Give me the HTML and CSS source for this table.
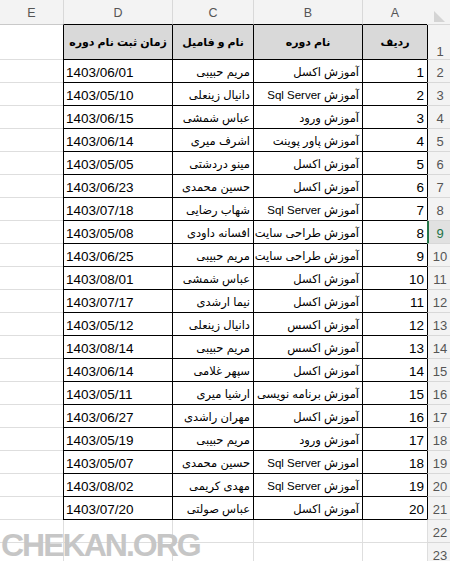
FILE: index.html
```html
<!DOCTYPE html>
<html lang="fa">
<head>
<meta charset="utf-8">
<link rel="stylesheet" href="styles.css">
</head>
<body>
<div class="page">
<div class="sheet">
  <div class="r ch corner"><svg class="tri" width="11" height="11" viewBox="0 0 11 11"><polygon points="0,0 0,11 11,11" fill="#d4d4d4"/></svg></div>
  <div class="ch cx">A</div><div class="ch cx">B</div><div class="ch cx">C</div><div class="ch cx">D</div><div class="ch e">E</div>

  <div class="r rt rb">1</div>
  <div class="h">ردیف</div><div class="h">نام دوره</div><div class="h">نام و فامیل</div><div class="h">زمان ثبت نام دوره</div><div class="e"></div>

  <div class="r rt">2</div><div class="t a">1</div><div class="t p">آموزش اکسل</div><div class="t p">مریم حبیبی</div><div class="t d">1403/06/01</div><div class="e"></div>
  <div class="r rt">3</div><div class="t a">2</div><div class="t p">آموزش Sql Server</div><div class="t p">دانیال زینعلی</div><div class="t d">1403/05/10</div><div class="e"></div>
  <div class="r rt">4</div><div class="t a">3</div><div class="t p">آموزش ورود</div><div class="t p">عباس شمشی</div><div class="t d">1403/06/15</div><div class="e"></div>
  <div class="r rt">5</div><div class="t a">4</div><div class="t p">آموزش پاور پوینت</div><div class="t p">اشرف میری</div><div class="t d">1403/06/14</div><div class="e"></div>
  <div class="r rt">6</div><div class="t a">5</div><div class="t p">آموزش اکسل</div><div class="t p">مینو دردشتی</div><div class="t d">1403/05/05</div><div class="e"></div>
  <div class="r rt">7</div><div class="t a">6</div><div class="t p">آموزش اکسل</div><div class="t p">حسین محمدی</div><div class="t d">1403/06/23</div><div class="e"></div>
  <div class="r rt">8</div><div class="t a">7</div><div class="t p">آموزش Sql Server</div><div class="t p">شهاب رضایی</div><div class="t d">1403/07/18</div><div class="e"></div>
  <div class="r sel">9</div><div class="t a">8</div><div class="t p">آموزش طراحی سایت</div><div class="t p">افسانه داودی</div><div class="t d">1403/05/08</div><div class="e"></div>
  <div class="r rt">10</div><div class="t a">9</div><div class="t p">آموزش طراحی سایت</div><div class="t p">مریم حبیبی</div><div class="t d">1403/06/25</div><div class="e"></div>
  <div class="r rt">11</div><div class="t a">10</div><div class="t p">آموزش اکسل</div><div class="t p">عباس شمشی</div><div class="t d">1403/08/01</div><div class="e"></div>
  <div class="r rt">12</div><div class="t a">11</div><div class="t p">آموزش اکسل</div><div class="t p">نیما ارشدی</div><div class="t d">1403/07/17</div><div class="e"></div>
  <div class="r rt">13</div><div class="t a">12</div><div class="t p">آموزش اکسس</div><div class="t p">دانیال زینعلی</div><div class="t d">1403/05/12</div><div class="e"></div>
  <div class="r rt">14</div><div class="t a">13</div><div class="t p">آموزش اکسس</div><div class="t p">مریم حبیبی</div><div class="t d">1403/08/14</div><div class="e"></div>
  <div class="r rt">15</div><div class="t a">14</div><div class="t p">آموزش اکسل</div><div class="t p">سپهر غلامی</div><div class="t d">1403/06/14</div><div class="e"></div>
  <div class="r rt">16</div><div class="t a">15</div><div class="t p">آموزش برنامه نویسی</div><div class="t p">ارشیا میری</div><div class="t d">1403/05/11</div><div class="e"></div>
  <div class="r rt">17</div><div class="t a">16</div><div class="t p">آموزش اکسل</div><div class="t p">مهران راشدی</div><div class="t d">1403/06/27</div><div class="e"></div>
  <div class="r rt">18</div><div class="t a">17</div><div class="t p">آموزش ورود</div><div class="t p">مریم حبیبی</div><div class="t d">1403/05/19</div><div class="e"></div>
  <div class="r rt">19</div><div class="t a">18</div><div class="t p">اموزش Sql Server</div><div class="t p">حسین محمدی</div><div class="t d">1403/05/07</div><div class="e"></div>
  <div class="r rt">20</div><div class="t a">19</div><div class="t p">آموزش Sql Server</div><div class="t p">مهدی کریمی</div><div class="t d">1403/08/02</div><div class="e"></div>
  <div class="r rt">21</div><div class="t a">20</div><div class="t p">آموزش اکسل</div><div class="t p">عباس صولتی</div><div class="t d">1403/07/20</div><div class="e"></div>

  <div class="r">22</div><div></div><div></div><div></div><div></div><div class="e"></div>
  <div class="r">23</div><div></div><div></div><div></div><div></div><div class="e"></div>
</div>
<div class="mark">CHEKAN.ORG</div>
</div>
</body>
</html>
```

FILE: styles.css
```css
html, body {
  margin: 0;
  padding: 0;
  background: #ffffff;
}

.page {
  position: relative;
  width: 450px;
  height: 561px;
  overflow: hidden;
}

.sheet {
  display: grid;
  direction: rtl;
  grid-template-columns: 23px 65px 109px 81px 109px 63px;
  grid-template-rows: 25px 35px repeat(22, 23px);
  width: 450px;
  font-family: "Liberation Sans", "DejaVu Sans", sans-serif;
  font-size: 13.5px;
  color: #000;
}

.sheet > div {
  box-sizing: border-box;
  border-left: 1px solid #dedede;
  border-bottom: 1px solid #dedede;
  display: flex;
  align-items: flex-end;
  justify-content: flex-start;
  padding: 0 3px 2px 3px;
  white-space: nowrap;
  overflow: hidden;
}

.sheet > div.e {
  border-left: none;
}

/* column headers */
.sheet > .ch {
  background: #f3f3f3;
  color: #555;
  font-size: 12.5px;
  justify-content: center;
  padding-bottom: 4px;
  border-left-color: #d8d8d8;
  border-bottom-color: #c9c9c9;
}

.sheet > .ch.cx {
  border-bottom-color: #000;
}

.sheet > .corner {
  justify-content: flex-start;
  padding: 0 0 3px 2px;
  direction: ltr;
  border-left: none;
}

.tri {
  display: block;
}

/* row headers */
.sheet > .r {
  background: #f3f3f3;
  color: #555;
  font-size: 13px;
  justify-content: center;
  padding: 0 0 2px 2px;
  border-bottom-color: #d8d8d8;
}

.sheet > .r.rt {
  border-left-color: #000;
}

.sheet > .r.rb {
  padding-bottom: 0;
}

.sheet > .r.sel {
  background: #e1e1e1;
  color: #217346;
  border-left: 2px solid #217346;
  padding-left: 1px;
}

/* table header row */
.sheet > .h {
  background: #d9d9d9;
  font-weight: bold;
  font-size: 11px;
  justify-content: center;
  align-items: center;
  padding: 0 2px;
  border-left-color: #000;
  border-bottom-color: #000;
}

/* data cells */
.sheet > .t {
  border-left-color: #000;
  border-bottom-color: #000;
}

.sheet > .t.p {
  font-size: 11.5px;
  padding-bottom: 3px;
}

.sheet > .t.a {
  justify-content: flex-start;
}

.sheet > .t.d {
  justify-content: flex-end;
  padding-left: 2px;
}

.mark {
  position: absolute;
  left: 1px;
  top: 527px;
  font-family: "Liberation Sans", sans-serif;
  font-weight: bold;
  font-size: 32px;
  letter-spacing: -2px;
  color: #c6c6c6;
  line-height: 36px;
}
```
